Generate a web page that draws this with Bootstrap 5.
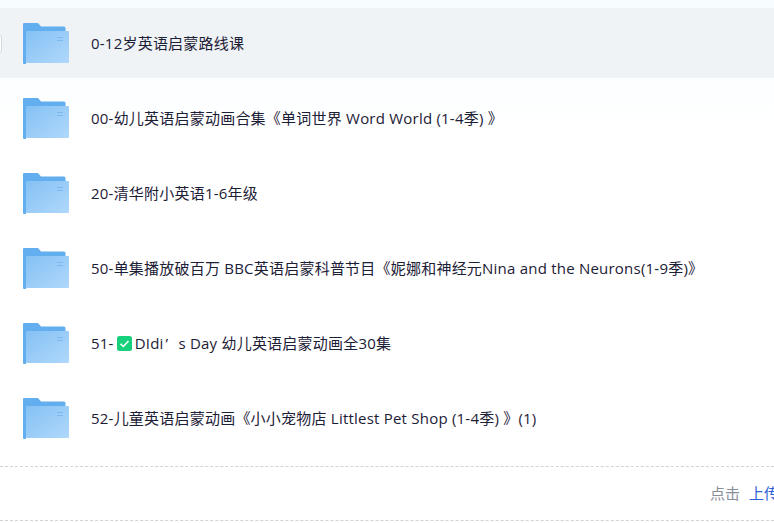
<!DOCTYPE html>
<html lang="zh-CN">
<head>
<meta charset="UTF-8">
<title>Files</title>
<link href="https://cdn.jsdelivr.net/npm/bootstrap@5.3.0/dist/css/bootstrap.min.css" rel="stylesheet">
<style>
html, body { height: 523px; overflow: hidden; }
body { background: linear-gradient(#f6fcff 0, #fff 130px); font-family: "Open Sans", "Noto Sans CJK SC", sans-serif; color: #1c2036; }
.file-list { padding-top: 8px; }
.file-row { height: 70px; margin-bottom: 5px; padding-left: 23px; position: relative; overflow: hidden; }
.file-row.is-hover { background: #eff3f5; }
.row-check { position: absolute; left: -14px; top: 27px; width: 16px; height: 18px; background: #fff; border: 1px solid #d5d8dc; border-radius: 3px; }
.folder-icon { width: 46px; height: 42px; flex: none; margin-right: 22px; }
.file-name { font-size: 15px; line-height: 20px; white-space: nowrap; letter-spacing: .22px; }
.wide-quote { margin-left: 2px; margin-right: 6px; }
.tick { width: 15px; height: 15px; vertical-align: -2px; margin: 0 3px 0 3px; }
.foot-bar { height: 55px; margin-top: 13px; border-top: 1px dashed #d3d3d3; border-bottom: 1px dashed #d3d3d3; padding-left: 710px; font-size: 15px; white-space: nowrap; overflow: hidden; }
.foot-bar span { color: #8a8e99; margin-right: 9px; flex: none; }
.foot-bar a { color: #2a60d8; text-decoration: none; flex: none; }
</style>
</head>
<body>
<svg width="0" height="0" class="d-block">
  <defs>
    <linearGradient id="folderFront" x1="0" y1="0" x2="1" y2="1">
      <stop offset="0" stop-color="#84c1f4"/>
      <stop offset="1" stop-color="#b0d8fb"/>
    </linearGradient>
    <symbol id="folder" viewBox="0 0 46 42">
      <path d="M0 2a1 1 0 0 1 1-1h14l3 3.500h23a1.500 1.500 0 0 1 1.500 1.500v4H3v32H1a1 1 0 0 1-1-1z" fill="#63aeee"/>
      <rect x="3" y="9" width="43" height="32" rx="1" fill="url(#folderFront)"/>
      <rect x="34" y="15" width="6" height="1" fill="#7cb9ee"/>
      <rect x="34" y="18" width="6" height="1" fill="#7cb9ee"/>
    </symbol>
  </defs>
</svg>
<div class="file-list">
  <div class="file-row is-hover d-flex align-items-center">
    <div class="row-check"></div>
    <svg class="folder-icon"><use href="#folder"/></svg>
    <div class="file-name">0-12岁英语启蒙路线课</div>
  </div>
  <div class="file-row d-flex align-items-center">
    <svg class="folder-icon"><use href="#folder"/></svg>
    <div class="file-name">00-幼儿英语启蒙动画合集《单词世界 Word World (1-4季) 》</div>
  </div>
  <div class="file-row d-flex align-items-center">
    <svg class="folder-icon"><use href="#folder"/></svg>
    <div class="file-name">20-清华附小英语1-6年级</div>
  </div>
  <div class="file-row d-flex align-items-center">
    <svg class="folder-icon"><use href="#folder"/></svg>
    <div class="file-name">50-单集播放破百万 BBC英语启蒙科普节目《妮娜和神经元Nina and the Neurons(1-9季)》</div>
  </div>
  <div class="file-row d-flex align-items-center">
    <svg class="folder-icon"><use href="#folder"/></svg>
    <div class="file-name">51-<svg class="tick" viewBox="0 0 15 15"><rect width="15" height="15" rx="2.500" fill="#17d07c"/><path d="M3.500 7.800l2.800 2.700 5.200-5.600" fill="none" stroke="#fff" stroke-width="1.500"/></svg>DIdi<span class="wide-quote">’</span> s Day 幼儿英语启蒙动画全30集</div>
  </div>
  <div class="file-row d-flex align-items-center">
    <svg class="folder-icon"><use href="#folder"/></svg>
    <div class="file-name">52-儿童英语启蒙动画《小小宠物店 Littlest Pet Shop (1-4季) 》(1)</div>
  </div>
</div>
<div class="foot-bar d-flex align-items-center"><span>点击</span><a href="#">上传</a></div>
<script src="https://cdn.jsdelivr.net/npm/bootstrap@5.3.0/dist/js/bootstrap.bundle.min.js"></script>
</body>
</html>
